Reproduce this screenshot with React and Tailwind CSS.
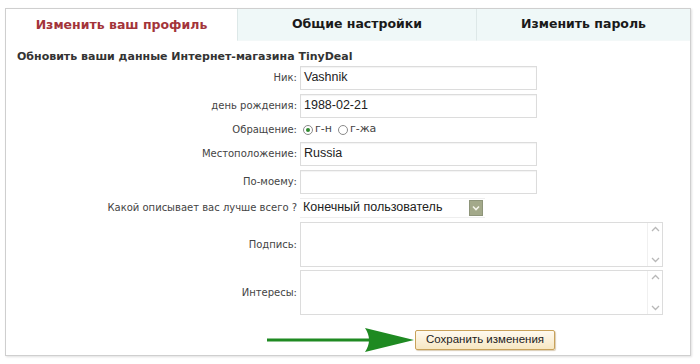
/* Profile settings form — tabs + labelled rows */

const verdana = { fontFamily: '"DejaVu Sans", Verdana, sans-serif' };
const arial = { fontFamily: '"Liberation Sans", Arial, sans-serif' };

const Label = ({ children }) => (
  <div className="w-[294px] shrink-0 pr-[3px] text-right text-[10px] text-[#444]" style={verdana}>
    {children}
  </div>
);

const TextInput = ({ value }) => (
  <div
    className="w-[237px] h-[24px] border border-[#dcdcdc] bg-white px-[3px] flex items-center text-[12.5px] text-[#222] shadow-[inset_0_1px_1px_rgba(0,0,0,0.05)]"
    style={arial}
  >
    {value}
  </div>
);

const Radio = ({ checked }) => (
  <span className="w-[10px] h-[10px] rounded-full border border-[#8a8a8a] bg-white flex items-center justify-center">
    {checked && <span className="w-[4px] h-[4px] rounded-full bg-[#2f8a2f]" />}
  </span>
);

const Chevron = ({ up }) => (
  <svg width="9" height="6" viewBox="0 0 9 6" aria-hidden="true">
    <path d={up ? "M1 5 L4.5 1.5 L8 5" : "M1 1 L4.5 4.5 L8 1"} fill="none" stroke="#b8b8b8" strokeWidth="1.3" />
  </svg>
);

const TextArea = () => (
  <div className="w-[363px] h-[45px] border border-[#dcdcdc] bg-white flex justify-end">
    <div className="w-[15px] h-full flex flex-col justify-between items-center py-[3px] border-l border-[#f0f0f0]">
      <Chevron up />
      <Chevron />
    </div>
  </div>
);

const tabs = [
  { label: "Изменить ваш профиль", w: "w-[231px]", active: true },
  { label: "Общие настройки", w: "w-[239px]" },
  { label: "Изменить пароль", w: "flex-1" },
];

export default function App() {
  return (
    <div className="w-[700px] h-[364px] bg-white pt-[8px] pl-[5px]">
      <div className="w-[686px] h-[348px] border border-[#cfcfcf] shadow-[1px_1px_2px_rgba(0,0,0,0.12)]">

        {/* tabs */}
        <div className="flex h-[32px]">
          {tabs.map((t, i) => (
            <div
              key={i}
              className={`${t.w} flex items-center justify-center text-[12.5px] font-bold ${
                t.active
                  ? "bg-white text-[#a3343a]"
                  : "bg-[#eff8f8] text-[#1a1a1a] border-l border-[#dde8e8] border-b border-b-[#f3f8f8]"
              }`}
              style={verdana}
            >
              {t.label}
            </div>
          ))}
        </div>

        {/* heading */}
        <div className="pl-[11px] pt-[8px] text-[11px] font-bold text-[#333]" style={verdana}>
          Обновить ваши данные Интернет-магазина TinyDeal
        </div>

        {/* rows */}
        <div className="flex flex-col gap-[4px]">
          <div className="flex items-center">
            <Label>Ник:</Label>
            <TextInput value="Vashnik" />
          </div>
          <div className="flex items-center">
            <Label>день рождения:</Label>
            <TextInput value="1988-02-21" />
          </div>
          <div className="flex items-center h-[16px]">
            <Label>Обращение:</Label>
            <div className="flex items-center gap-[2px] text-[11px] text-[#444] pl-[3px]" style={verdana}>
              <Radio checked />
              <span className="mr-[4px]">г-н</span>
              <Radio />
              <span>г-жа</span>
            </div>
          </div>
          <div className="flex items-center">
            <Label>Местоположение:</Label>
            <TextInput value="Russia" />
          </div>
          <div className="flex items-center">
            <Label>По-моему:</Label>
            <TextInput value="" />
          </div>
          <div className="flex items-center">
            <Label>Какой описывает вас лучше всего ?</Label>
            <div
              className="w-[185px] h-[20px] bg-white border-y border-[#eeeeee] flex items-center justify-between pl-[3px] pr-[2px] text-[12.5px] text-[#222]"
              style={arial}
            >
              <span>Конечный пользователь</span>
              <span className="w-[14px] h-[16px] bg-[#a3a98a] border border-[#8e957a] flex items-center justify-center">
                <svg width="8" height="6" viewBox="0 0 8 6" aria-hidden="true">
                  <path d="M1 1.5 L4 4.5 L7 1.5" fill="none" stroke="#f4f4ea" strokeWidth="1.6" />
                </svg>
              </span>
            </div>
          </div>
          <div className="flex items-center">
            <Label>Подпись:</Label>
            <TextArea />
          </div>
          <div className="flex items-center -mt-[1px]">
            <Label>Интересы:</Label>
            <TextArea />
          </div>
        </div>

        {/* save */}
        <div className="flex items-center mt-[11px] pl-[259px]">
          <svg width="150" height="28" viewBox="0 0 150 28" aria-hidden="true">
            <path d="M2 12.5 L104 12.5 L104 15.5 L2 15.5 Z" fill="#1f8a22" />
            <path d="M100 2 L149 14 L100 26 Q108 14 100 2 Z" fill="#1f8a22" />
          </svg>
          <button
            className="h-[20px] px-[10px] border border-[#c9a25a] rounded-[2px] bg-[linear-gradient(#fffaf0,#f7e7c2)] text-[11.5px] text-[#222] shadow-[1px_1px_1px_rgba(150,110,40,0.35)]"
            style={arial}
          >
            Сохранить изменения
          </button>
        </div>
      </div>
    </div>
  );
}
